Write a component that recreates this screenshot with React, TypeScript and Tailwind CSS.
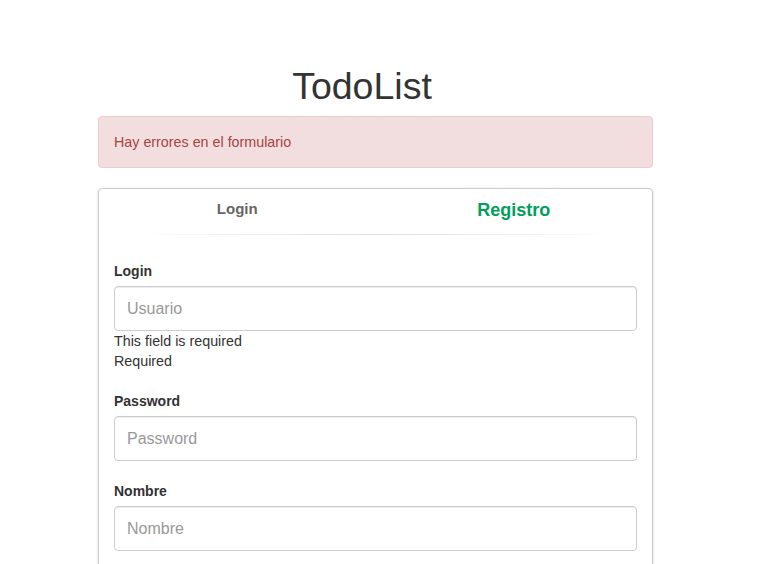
function Field(props: { label: string; placeholder: string; type?: string; errors?: string[] }) {
  return (
    <div className="mb-5">
      <label className="block mb-[5px] font-bold text-[14px] leading-5 text-[#333]">{props.label}</label>
      <input
        type={props.type || "text"}
        placeholder={props.placeholder}
        className="block w-full h-[45px] px-3 text-[16px] text-[#555] placeholder:text-[#999] bg-white border border-[#ccc] rounded-[4px] shadow-[inset_0_1px_1px_rgba(0,0,0,0.075)] outline-none"
      />
      {props.errors?.map((e) => (
        <p key={e} className="text-[14.3px] leading-5 text-[#333]">{e}</p>
      ))}
    </div>
  );
}

export default function App() {
  return (
    <div className="min-h-[564px] bg-white font-['Liberation_Sans',Arial,sans-serif] text-[#333]">
      <div className="w-[555px] ml-[98px]">
        <h1 className="pt-[66px] pb-[10px] text-[37.5px] leading-[40px] text-center text-[#333] mr-[27px]">TodoList</h1>
        <div className="mb-5 px-[15px] py-[15px] bg-[#f2dede] border border-[#ebccd1] rounded-[4px] text-[14.3px] leading-5 text-[#a94442]">
          Hay errores en el formulario
        </div>
        <div className="border border-[#ccc] rounded-[4px] shadow-[0_1px_3px_rgba(0,0,0,0.15)] bg-white">
          <div className="grid grid-cols-2 pt-[9px]">
            <div className="text-center text-[15px] leading-5 font-bold text-[#666] pt-[1px]">Login</div>
            <div className="text-center text-[18px] leading-[24px] font-bold text-[#029f5b]">Registro</div>
          </div>
          <div className="mx-[26px] mt-[12px] h-px bg-gradient-to-r from-transparent via-[#ddd] to-transparent"></div>
          <div className="px-[15px] pt-[26px] pb-[20px]">
            <Field label="Login" placeholder="Usuario" errors={["This field is required", "Required"]} />
            <Field label="Password" placeholder="Password" type="password" />
            <Field label="Nombre" placeholder="Nombre" />
          </div>
        </div>
      </div>
    </div>
  );
}
